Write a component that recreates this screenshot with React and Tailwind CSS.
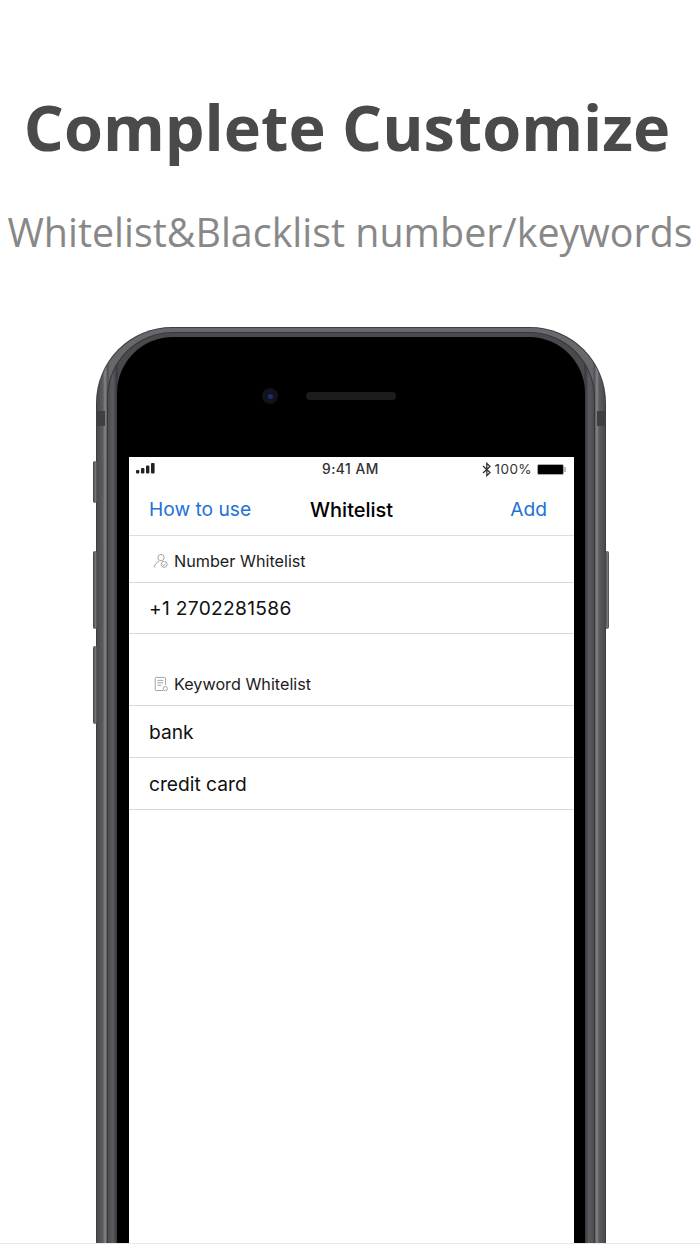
const PersonIcon = () => (
  <svg width="16" height="16" viewBox="0 0 16 16" fill="none" stroke="#9a9a9a" strokeWidth="0.9">
    <circle cx="8" cy="4.6" r="3.2" />
    <path d="M1.2 14.5C2 11 3.6 9.4 6 8.4" />
    <circle cx="11.2" cy="11.4" r="3" />
    <path d="M9.6 11.6l1.2 1 2-1.8" />
  </svg>
)

const DocIcon = () => (
  <svg width="16" height="16" viewBox="0 0 16 16" fill="none" stroke="#9a9a9a" strokeWidth="0.9">
    <path d="M10 14.5H3.2a1 1 0 0 1-1-1V2.4a1 1 0 0 1 1-1h8.4a1 1 0 0 1 1 1V9" />
    <path d="M4.4 4.4h6M4.4 6.8h6M4.4 9.2h4" />
    <circle cx="12.3" cy="12.6" r="2.1" />
  </svg>
)

const SectionHeader = ({ icon, label, className }) => (
  <div className={`flex items-end pb-[11px] pl-[24px] gap-[5px] text-[16.2px] leading-[20px] text-[#1c1c1c] border-b border-[#d9d9d9] ${className}`}>
    <span className="mb-[2px]">{icon}</span>
    <span>{label}</span>
  </div>
)

const Row = ({ label, className = 'h-[52px] pt-[1px]' }) => (
  <div className={`flex items-center pl-[20px] text-[19.2px] text-[#111] border-b border-[#d9d9d9] ${className}`}>
    {label}
  </div>
)

const StatusBar = () => (
  <div className="h-[24px] grid grid-cols-[186px_1fr_auto] items-center pl-[7px] pr-[8px] text-[13.5px] text-[#333]">
    <svg width="20" height="12" viewBox="0 0 20 12" fill="#222">
      <rect x="0" y="7" width="3.4" height="3.5" rx="1" />
      <rect x="5" y="5" width="3.4" height="5.5" rx="1" />
      <rect x="10" y="2.5" width="3.4" height="8" rx="1" />
      <rect x="15" y="0" width="3.6" height="10.5" rx="1" />
    </svg>
    <span className="text-[13.8px] font-medium tracking-[0.5px]">9:41 AM</span>
    <div className="flex items-center">
      <svg width="10" height="15" viewBox="0 0 10 15" fill="none" stroke="#333" strokeWidth="1.3">
        <path d="M1 4l7 6.5L4.8 13.6V1.4L8 4.5 1 11" />
      </svg>
      <span className="ml-[3px] tracking-[0.4px]">100%</span>
      <div className="ml-[5px] w-[27px] h-[11px] bg-black border border-[#aaa] rounded-[2px]" />
      <div className="w-[2px] h-[5px] bg-[#bbb]" />
    </div>
  </div>
)

const SideButton = ({ className }) => (
  <div className={`absolute w-[4px] rounded-[2px] bg-[linear-gradient(90deg,#3c3c40,#77777c_60%,#4a4a4e)] ${className}`} />
)

export default function App() {
  return (
    <div className="relative h-[1244px] bg-white overflow-hidden font-['Open_Sans',sans-serif] border-b border-[#e8e8e8]">
      <h1 className="pt-[85px] pr-[6px] h-[170px] text-center text-[63px] leading-[84px] font-bold text-[#4a4a4a] whitespace-nowrap">
        Complete Customize
      </h1>
      <p className="pt-[36px] h-[157px] text-center text-[39.4px] leading-[52px] font-normal text-[#888] whitespace-nowrap">
        Whitelist&amp;Blacklist number/keywords
      </p>
      <div className="relative ml-[96px] w-[510px] h-[917px]">
        <SideButton className="-left-[3px] top-[134px] h-[42px]" />
        <SideButton className="-left-[3px] top-[224px] h-[78px]" />
        <SideButton className="-left-[3px] top-[319px] h-[78px]" />
        <SideButton className="-right-[3px] top-[224px] h-[78px]" />
        <div className="h-full rounded-t-[76px] bg-[#3e3e42] pt-[1px] px-[1px]">
          <div className="h-full rounded-t-[75px] pt-[4px] px-[10px] bg-[linear-gradient(90deg,#4a4a4e_0px,#5c5c60_6px,#858589_8px,#4a4a4e_11px,#68686c_12px,#68686c_calc(100%-12px),#4a4a4e_calc(100%-11px),#858589_calc(100%-8px),#5c5c60_calc(100%-6px),#4a4a4e_100%)]">
            <div className="h-full rounded-t-[66px] bg-[#37373b] pt-[1px] px-[1px]">
              <div className="h-full rounded-t-[65px] pt-[4px] px-[9px] bg-[linear-gradient(90deg,#4c4c50_0px,#5c5c60_5px,#38383c_9px,#4a4a4e_10px,#4a4a4e_calc(100%-10px),#38383c_calc(100%-9px),#5c5c60_calc(100%-5px),#4c4c50_100%)]">
                <div className="h-full rounded-t-[56px] bg-black flex flex-col pl-[12px] pr-[11px]">
                  <div className="h-[120px] shrink-0 flex items-center pl-[133px] pb-[2px]">
                    <div className="w-[16px] h-[16px] rounded-full bg-[#11131c] flex items-center justify-center">
                      <div className="w-[5px] h-[5px] rounded-full bg-[#1d2f6b]" />
                    </div>
                    <div className="ml-[28px] w-[90px] h-[8px] rounded-full bg-[#1c1c1e]" />
                  </div>
                  <div className="flex-1 bg-white font-['Inter',sans-serif]">
                    <StatusBar />
                    <div className="h-[55px] grid grid-cols-[161px_1fr_auto] items-center pl-[20px] pr-[27px] pt-[3px] border-b border-[#dedede] text-[19.2px] text-[#2272d6]">
                      <span>How to use</span>
                      <span className="text-[20px] font-medium text-black">Whitelist</span>
                      <span>Add</span>
                    </div>
                    <SectionHeader className="h-[47px]" icon={<PersonIcon />} label="Number Whitelist" />
                    <Row className="h-[51px] tracking-[0.3px]" label="+1 2702281586" />
                    <SectionHeader className="h-[72px]" icon={<DocIcon />} label="Keyword Whitelist" />
                    <Row label="bank" />
                    <Row label="credit card" />
                  </div>
                </div>
              </div>
            </div>
          </div>
        </div>
        <div className="absolute left-[1px] top-[84px] w-[8px] h-[15px] bg-[#3f3f43]" />
        <div className="absolute right-[1px] top-[84px] w-[8px] h-[15px] bg-[#3f3f43]" />
      </div>
    </div>
  )
}
